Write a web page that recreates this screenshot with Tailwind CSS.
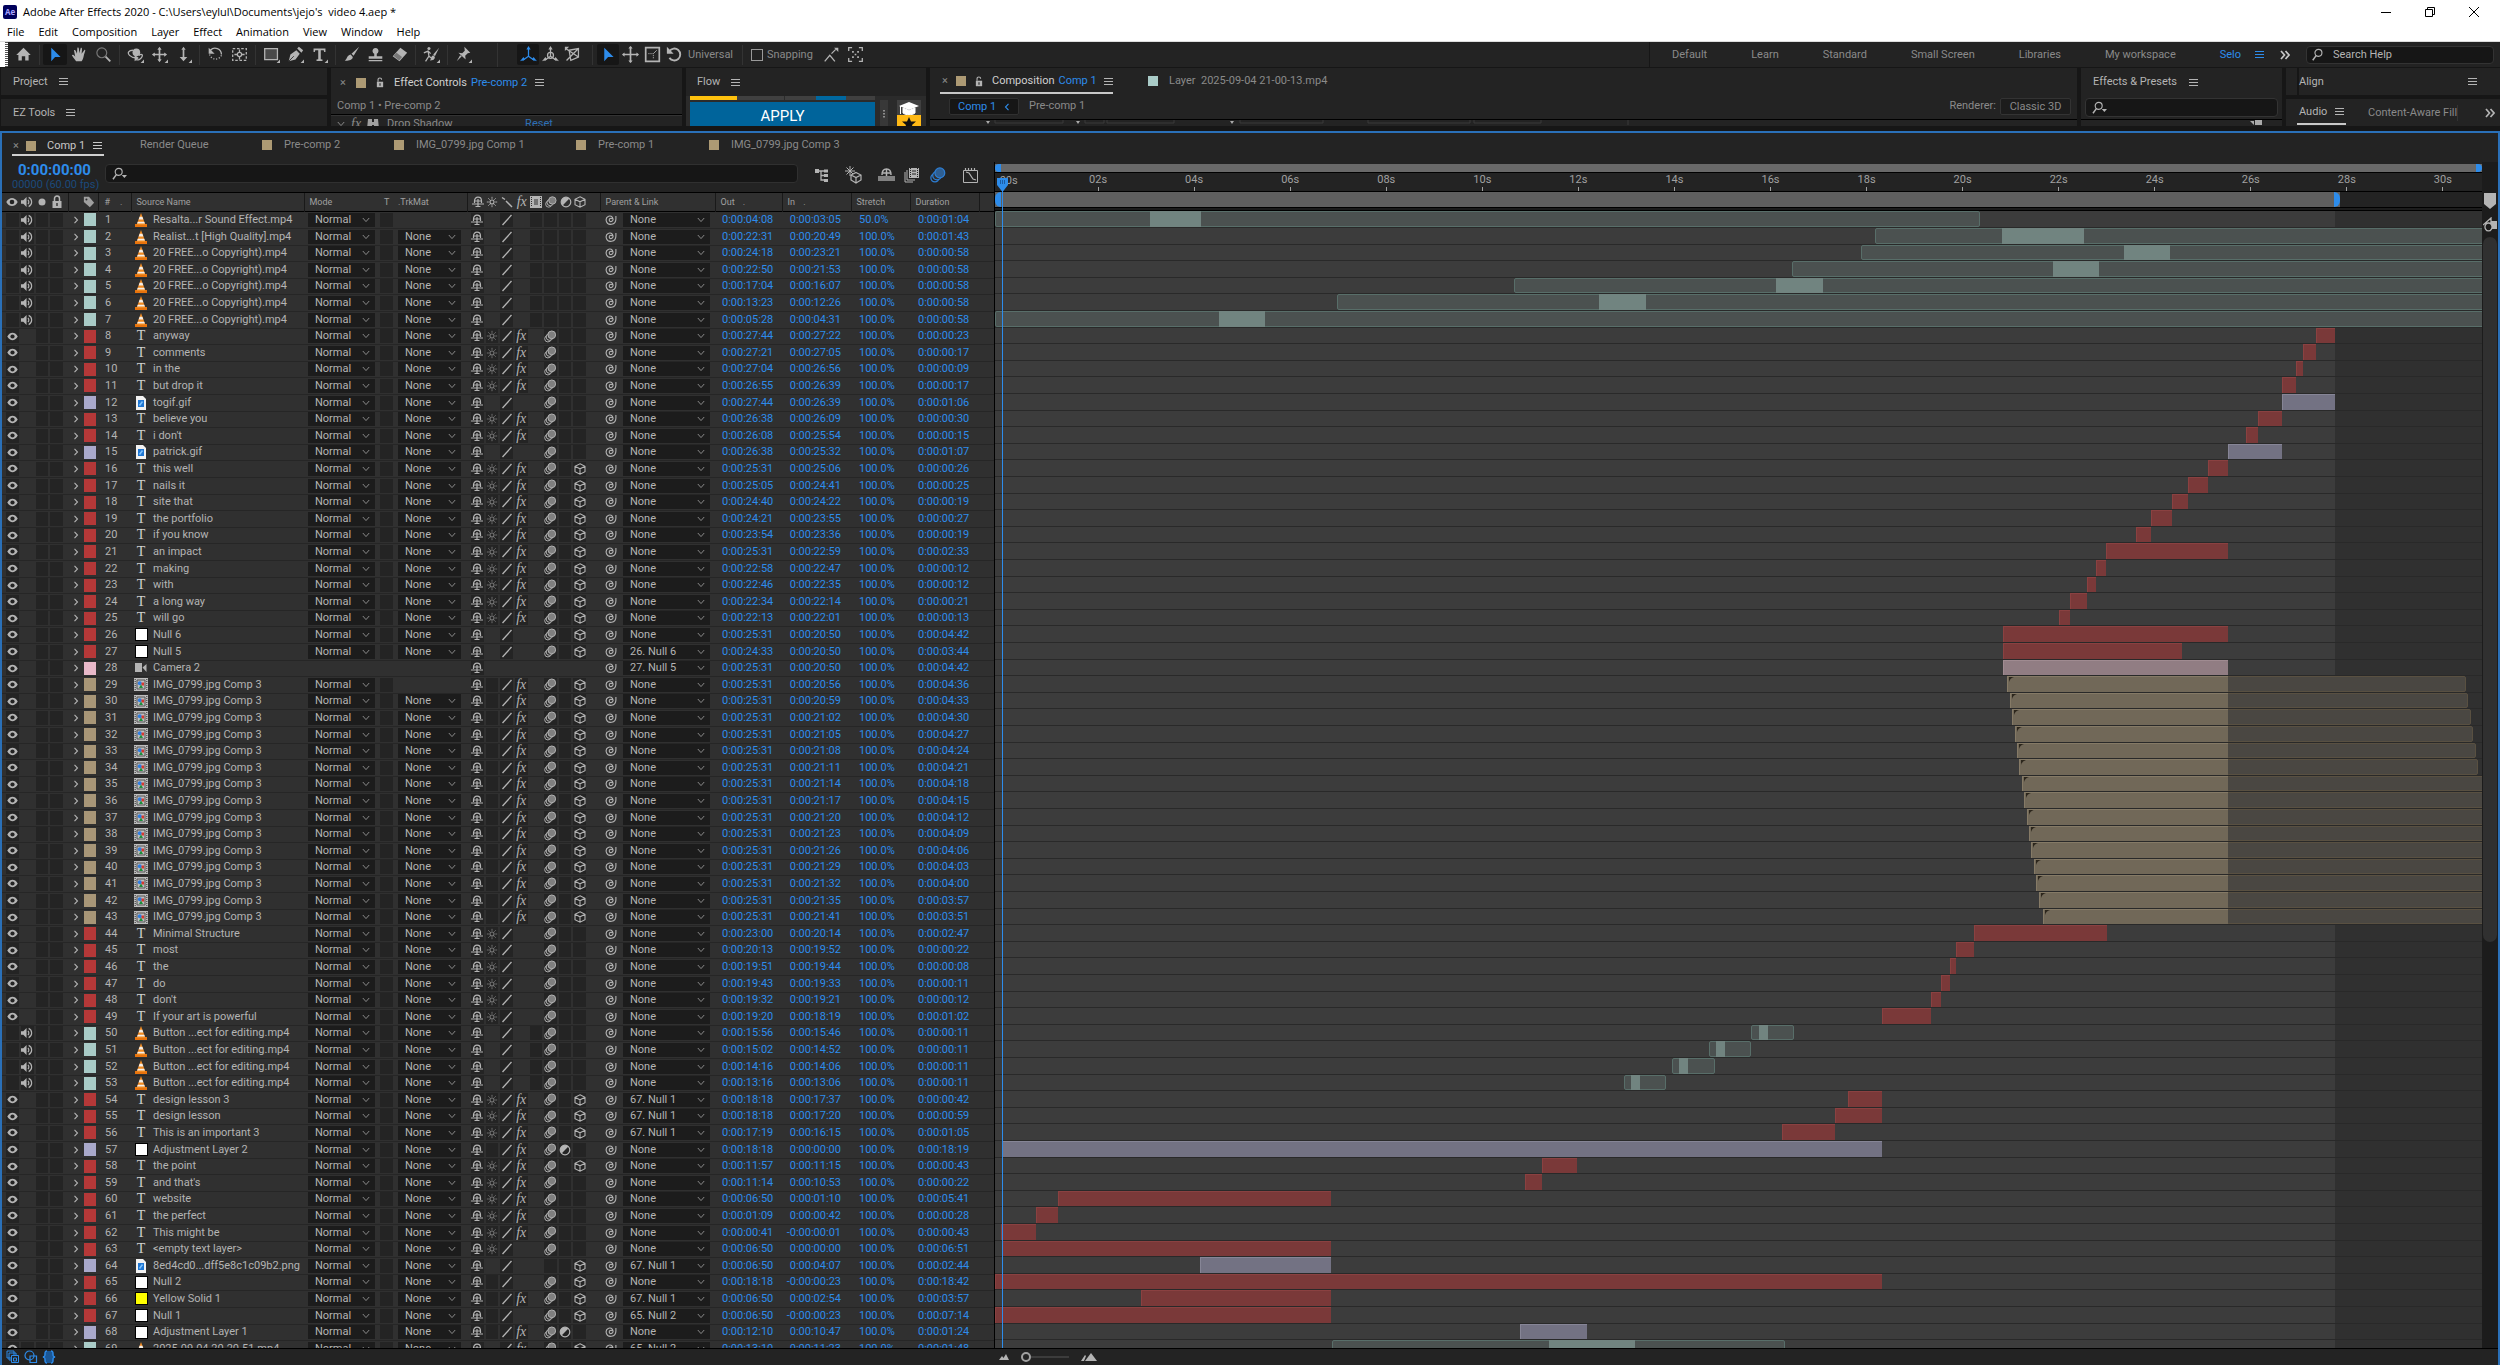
<!DOCTYPE html>
<html lang="en">
<head>
<meta charset="utf-8">
<title>Adobe After Effects 2020</title>
<script src="https://cdn.jsdelivr.net/npm/@tailwindcss/browser@4"></script>
</head>
<body class="flex h-screen flex-col overflow-hidden bg-[#161616] font-[Roboto,sans-serif] text-[11px] leading-4 text-[#b4b4b4]">

<svg class="hidden" aria-hidden="true">
  <symbol id="menu" viewBox="0 0 9 9"><path d="M0 1.500h9M0 4.500h9M0 7.500h9" stroke="currentColor"/></symbol>
  <symbol id="chev" viewBox="0 0 8 6"><path d="M.8 1 4 4.600 7.200 1" fill="none" stroke="currentColor"/></symbol>
  <symbol id="twirl" viewBox="0 0 6 8"><path d="M1.500 .8 4.500 4 1.500 7.200" fill="none" stroke="currentColor" stroke-width="1.100"/></symbol>
  <symbol id="more" viewBox="0 0 10 10"><path d="M1 1l3.500 4L1 9M5.500 1 9 5 5.500 9" fill="none" stroke="currentColor" stroke-width="1.700"/></symbol>
  <symbol id="lens" viewBox="0 0 16 16"><circle cx="8.500" cy="5.500" r="4" fill="none" stroke="currentColor" stroke-width="1.300"/><path d="M6 8.500 2 14" stroke="currentColor" stroke-width="1.700"/></symbol>
  <symbol id="lensdrop" viewBox="0 0 18 16"><circle cx="7.500" cy="5.500" r="4" fill="none" stroke="currentColor" stroke-width="1.300"/><path d="M5 8.500 1 14" stroke="currentColor" stroke-width="1.700"/><path d="M11 9h6l-3 3.500z" fill="currentColor"/></symbol>
  <symbol id="unlock" viewBox="0 0 10 14"><path d="M2.500 6V3.500a2.300 2.300 0 0 1 4.600 0" fill="none" stroke="currentColor" stroke-width="1.400"/><path d="M1 6h8v7H1z" fill="currentColor"/><path d="M5 8v3" stroke="#232323" stroke-width="1.400"/></symbol>
  <symbol id="lock" viewBox="0 0 12 14"><path d="M3.500 6V3.500a2.500 2.500 0 0 1 5 0V6" fill="none" stroke="currentColor" stroke-width="1.500"/><path d="M1.500 6h9v7h-9z" fill="currentColor"/><path d="M6 8v3" stroke="#303030" stroke-width="1.400"/></symbol>
  <symbol id="eye" viewBox="0 0 12 12"><path d="M.3 6C2 3 4 2 6 2s4 1 5.700 4C10 9 8 10 6 10S2 9 .3 6z" fill="currentColor"/><circle cx="6" cy="6" r="2.300" fill="#232323"/></symbol>
  <symbol id="audio" viewBox="0 0 13 13"><path d="M0 4.500h2.500L6 1v11L2.500 8.500H0z" fill="currentColor"/><path d="M7.500 4.200a3.200 3.200 0 0 1 0 4.600M8.300 1.500a5.500 5.500 0 0 1 0 10" fill="none" stroke="currentColor" stroke-width="1.300"/></symbol>
  <symbol id="dot" viewBox="0 0 12 12"><circle cx="6" cy="6" r="3.500" fill="currentColor"/></symbol>
  <symbol id="tag" viewBox="0 0 14 14"><path d="M1 1h6l6 7-5 5-7-6z" fill="currentColor"/><circle cx="4" cy="4" r="1.200" fill="#303030"/></symbol>
  <symbol id="shy" viewBox="0 0 12 12"><path d="M2.500 7V5C2.500 2.700 4 1.200 6 1.200S9.500 2.700 9.500 5v2M2.500 5h7" fill="none" stroke="currentColor" stroke-width="1.200"/><path d="M6 3v7.500M0 8h12M3.500 10.500h5" stroke="currentColor" stroke-width="1.200"/></symbol>
  <symbol id="sun" viewBox="0 0 12 12"><circle cx="6" cy="6" r="2" fill="none" stroke="currentColor" stroke-width="1.100"/><path d="M6 .8v2M6 9.200v2M.8 6h2M9.200 6h2M2.300 2.300l1.400 1.400M8.300 8.300l1.400 1.400M9.700 2.300 8.300 3.700M3.700 8.300 2.300 9.700" stroke="currentColor" stroke-width=".9"/></symbol>
  <symbol id="slash" viewBox="0 0 12 12"><path d="M10.500 1 1.500 11" stroke="currentColor" stroke-width="1.300"/></symbol>
  <symbol id="back" viewBox="0 0 12 12"><path d="M1 1.500l3 2M5 5l6 6" stroke="currentColor" stroke-width="1.500"/></symbol>
  <symbol id="film" viewBox="0 0 12 12"><path d="M0 0h12v12H0z" fill="currentColor"/><path d="M1.500 1v10M10.500 1v10" stroke="#303030" stroke-dasharray="1 1"/><path d="M4 4h4M4 6h4M4 8h4" stroke="#303030"/></symbol>
  <symbol id="blur" viewBox="0 0 13 13"><circle cx="4" cy="8.800" r="3.300" fill="none" stroke="currentColor"/><circle cx="5.700" cy="7" r="3.500" fill="#303030" stroke="currentColor"/><circle cx="8" cy="4.800" r="4" fill="#303030"/><circle cx="8" cy="4.800" r="4" fill="currentColor" opacity=".6"/><circle cx="8" cy="4.800" r="4" fill="none" stroke="currentColor"/></symbol>
  <symbol id="adj" viewBox="0 0 12 12"><circle cx="6" cy="6" r="4.800" fill="none" stroke="currentColor" stroke-width="1.200"/><path d="M9.400 2.600a4.800 4.800 0 1 0-6.800 6.800z" fill="currentColor"/></symbol>
  <symbol id="cube" viewBox="0 0 12 12"><path d="M6 .8 11 3.300v5.400L6 11.200 1 8.700V3.300zM1 3.300l5 2.500 5-2.500M6 5.800v5.400" fill="none" stroke="currentColor" stroke-width="1.100"/></symbol>
  <symbol id="whip" viewBox="0 0 12 12"><path d="M7.400 4.800C6.800 4 5.300 3.900 4.600 4.900c-.8 1.200 0 2.700 1.300 2.700 1.700 0 2.500-1.700 2-3.200C7.300 2.300 5.300 1.500 3.600 2.300 1.500 3.200.8 5.500 1.400 7.400 2 9.500 4.200 10.700 6.600 10.300c2.700-.5 4.300-2.500 4.300-5.300V2" fill="none" stroke="currentColor" stroke-width="1.100"/></symbol>
  <symbol id="cone" viewBox="0 0 12 14"><path d="M0 11h12v3H0z" fill="#e8730c"/><path d="M6 0 1.500 12h9z" fill="#f08a20"/><path d="M4.600 3.800h2.800l1 2.700H3.600zM2.800 8.700h6.400l.7 1.800H2.100z" fill="#f4eee8"/></symbol>
  <symbol id="doc" viewBox="0 0 12 14"><path d="M1 0h7l3 3v11H1z" fill="#f2f2f2"/><path d="M3 4h6v7H3z" fill="#1f77d4"/><path d="M4.500 9.500 7.500 5.500" stroke="#7ec3ff" stroke-width="1.500"/></symbol>
  <symbol id="comp" viewBox="0 0 14 13"><path d="M0 0h14v13H0z" fill="#bdbdbd"/><path d="M1.200 1v11M12.800 1v11" stroke="#333" stroke-dasharray="1 1"/><path d="M3 2h8v9H3z" fill="none" stroke="#555"/><circle cx="5.800" cy="5.200" r="2" fill="#2f7de0"/><path d="M7.500 4.500H10v3H7.500z" fill="#d8382e"/><path d="M7 6.500 9 10H5z" fill="#1c8e3a"/></symbol>
  <symbol id="cam" viewBox="0 0 12 10"><path d="M0 0h7v9H0zM7.500 4.500 11.500 1v8z" fill="currentColor"/></symbol>
</svg>

<!-- title bar and menus -->
<header class="shrink-0 bg-white font-['Open_Sans',sans-serif] text-black">
  <div class="flex h-[23px] items-center pl-[3px]">
    <span class="flex h-3.5 w-3.5 items-center justify-center rounded-xs bg-[#00005b] text-[8px] font-bold text-[#a9a4ff]">Ae</span>
    <h1 class="ml-1.5 text-[11px] whitespace-pre">Adobe After Effects 2020 - C:\Users\eylul\Documents\jejo's  video 4.aep *</h1>
    <div class="ml-auto flex pr-1">
      <button class="flex w-11 justify-center" aria-label="Minimize"><svg class="h-3 w-3" viewBox="0 0 12 12"><path d="M1 6.500h10" stroke="#000"/></svg></button>
      <button class="flex w-11 justify-center" aria-label="Restore"><svg class="h-3 w-3" viewBox="0 0 12 12"><path d="M1.500 3.500h7v7h-7zM3.500 3.500v-2h7v7h-2" fill="none" stroke="#000"/></svg></button>
      <button class="flex w-11 justify-center" aria-label="Close"><svg class="h-3 w-3" viewBox="0 0 12 12"><path d="M1 1l10 10M11 1 1 11" stroke="#000"/></svg></button>
    </div>
  </div>
  <nav class="flex h-[19px] items-center gap-[14px] border-b border-[#ddd] pl-[7px] text-[11px]">
    <a href="#">File</a><a href="#">Edit</a><a href="#">Composition</a><a href="#">Layer</a><a href="#">Effect</a><a href="#">Animation</a><a href="#">View</a><a href="#">Window</a><a href="#">Help</a>
  </nav>
</header>

<!-- tools -->
<div class="flex h-[25px] shrink-0 bg-white">
  <div class="flex w-2 justify-end"><span class="h-full w-[3px] bg-[repeating-linear-gradient(#555_0_1px,#fff_1px_2px)]"></span></div>
  <div class="flex flex-1 items-center bg-[#232323] pl-[3px]">
    <div id="tools" class="flex items-center"></div>
    <span class="ml-[22px] h-6 w-px bg-[#333]"></span>
    <div id="axes" class="ml-[19px] flex items-center"></div>
    <span class="mr-1 ml-[9px] h-5 w-px bg-[#333]"></span>
    <div id="gizmo" class="flex items-center"></div>
    <span class="w-[57px] pl-[3px] text-[#8a8a8a]">Universal</span>
    <span class="h-5 w-px bg-[#333]"></span>
    <label class="ml-2 flex w-16 items-center gap-1 text-[#8a8a8a]"><input type="checkbox" class="h-3 w-3 appearance-none border border-[#9a9a9a]">Snapping</label>
    <div id="snap" class="ml-1 flex items-center"></div>
    <div class="ml-auto flex h-full w-[851px] shrink-0 items-center border-l border-[#161616] text-[#8a8a8a]">
      <div class="flex flex-1 items-center justify-between pr-2 pl-[22px]">
        <a href="#">Default</a><a href="#">Learn</a><a href="#">Standard</a><a href="#">Small Screen</a><a href="#">Libraries</a><a href="#">My workspace</a>
        <a href="#" class="flex items-center gap-3.5 text-[#2d8ceb]">Selo<svg class="size-[9px]"><use href="#menu"/></svg></a>
      </div>
      <button class="px-2 text-[#c8c8c8]" aria-label="More workspaces"><svg class="size-[10px]"><use href="#more"/></svg></button>
      <label class="mr-[6px] ml-2 flex h-[18px] w-[188px] items-center rounded-sm border border-[#333] bg-[#161616] pl-1 text-[#b4b4b4]"><svg class="size-3.5"><use href="#lens"/></svg><input class="ml-2 w-32 placeholder:text-[#b4b4b4]" placeholder="Search Help"></label>
    </div>
  </div>
</div>

<!-- upper panels -->
<div class="mt-px flex h-[58px] shrink-0 gap-1 overflow-hidden pl-px">
  <div class="flex w-[326px] shrink-0 flex-col gap-1">
    <section class="flex flex-1 items-center gap-[11px] bg-[#232323] pl-3">Project<svg class="size-[9px]"><use href="#menu"/></svg></section>
    <section class="flex flex-1 items-center gap-[11px] bg-[#232323] pl-3">EZ Tools<svg class="size-[9px]"><use href="#menu"/></svg></section>
  </div>
  <section class="w-[351px] shrink-0 overflow-hidden bg-[#232323]">
    <div class="flex h-[29px] items-center pl-[9px] whitespace-nowrap"><button class="w-4 text-left text-[#8a8a8a]" aria-label="Close">×</button><span class="h-[10px] w-[10px] bg-[#ad9a74]"></span><svg class="mx-2.5 h-[11px] w-2"><use href="#unlock"/></svg><span class="text-[#d0d0d0]">Effect Controls</span><span class="ml-1 text-[#2d8ceb]">Pre-comp 2</span><svg class="ml-2 size-[9px]"><use href="#menu"/></svg></div>
    <div class="flex h-[18px] items-center border-b border-black pl-1.5 text-[#8a8a8a]">Comp 1 • Pre-comp 2</div>
    <div class="flex h-4 items-center border-t border-[#333] pl-1.5 text-[#8a8a8a]"><svg class="h-1.5 w-2"><use href="#chev"/></svg><i class="ml-1.5 font-['Liberation_Serif',serif] text-[14px]">fx</i><svg class="ml-1.5 h-2.5 w-3" viewBox="0 0 12 10"><path d="M1 0h4v3h2V0h4l1 10H7V6H5v4H0z" fill="#a0a0a0"/></svg><span class="ml-2 w-[138px]">Drop Shadow</span><span class="text-[#2d6fb5]">Reset</span></div>
  </section>
  <section class="w-60 shrink-0 overflow-hidden bg-[#232323]">
    <div class="flex h-7 items-center gap-[11px] pl-[11px]">Flow<svg class="size-[9px]"><use href="#menu"/></svg></div>
    <div class="flex gap-[5px] bg-[#2b2b2b] pl-1">
      <div class="w-[188px]">
        <div class="mb-0.5 flex h-1"><span class="w-[47px] bg-[#ffc20e]"></span><span class="mr-px w-[47px] bg-[#404040]"></span><span class="w-[31px] bg-[#404040]"></span><span class="w-[30px] bg-[#0068a0]"></span><span class="flex-1 bg-[#404040]"></span></div>
        <button class="flex h-7 w-full items-center justify-center bg-[#00649b] text-[15px] text-white">APPLY</button>
      </div>
      <span class="mt-1 flex h-7 w-2 items-center justify-center bg-[#383838]"><svg class="h-2.5 w-1" viewBox="0 0 4 10"><path d="M2 1v8" stroke="#aaa" stroke-width="1.500" stroke-dasharray="1.500 1.500"/></svg></span>
      <span class="mt-1 ml-1 flex w-6 flex-col items-center bg-[#404040]"><svg class="h-[15px] w-5" viewBox="0 0 20 15"><path d="M0 6 10 2l10 4-10 4z" fill="#fff"/><path d="M4 8v5c3 2.500 9 2.500 12 0V8l-6 2.500zM1.500 6v8" fill="#fff" stroke="#fff"/></svg><svg class="h-3 w-6 bg-[#ffb915]" viewBox="0 0 24 12"><path d="M12 2l2 4.500h5L15 10l1 3H8l1-3-4-3.500h5z" fill="#111"/></svg></span>
      <span class="mt-1 flex-1 bg-[#383838]"></span>
    </div>
  </section>
  <section class="flex-1 overflow-hidden bg-[#232323]">
    <div class="flex h-[26px] items-center pl-[10px] whitespace-nowrap">
      <div class="flex h-full w-[173px] items-center border-b-2 border-[#c8c8c8] pt-0.5 pl-0.5"><button class="w-3.5 text-left text-[#8a8a8a]" aria-label="Close">×</button><span class="h-[10px] w-[10px] bg-[#ad9a74]"></span><svg class="mx-2 h-[11px] w-2.5"><use href="#unlock"/></svg><span class="text-[#d0d0d0]">Composition</span><span class="ml-1 text-[#2d8ceb]">Comp 1</span><svg class="ml-auto size-[9px]"><use href="#menu"/></svg></div>
      <span class="ml-[35px] h-[10px] w-[10px] bg-[#a9cbc7]"></span><span class="ml-[11px] text-[#8a8a8a]">Layer&nbsp; 2025-09-04 21-00-13.mp4</span>
    </div>
    <div class="mt-1 flex h-[21px] items-start pr-1.5 pl-[19px]">
      <button class="flex h-[17px] w-[70px] items-center justify-between rounded-xs border border-[#303030] bg-[#161616] px-2 text-[#2d8ceb]">Comp 1<svg class="h-2 w-1.5 rotate-180"><use href="#twirl"/></svg></button>
      <a href="#" class="ml-2.5 text-[#8a8a8a]">Pre-comp 1</a>
      <span class="ml-auto text-[#8a8a8a]">Renderer:</span><button class="ml-1 h-[17px] w-[71px] rounded-xs border border-[#333] bg-[#1c1c1c] text-[#8a8a8a]">Classic 3D</button>
    </div>
    <div class="flex h-1.5 border-t border-black pl-14">
      <svg class="h-1.5 w-[680px]" viewBox="0 0 680 6"><path d="M0 1h4l-2 3zM90 1h4l-2 3zM244 1h4l-2 3z" fill="#aaa"/><path d="M9 0v3h68V0M99 0v3h19V0M121 0v3h67V0M254 0v3h83V0M382 0v3h102V0M488 0v3h67V0" fill="none" stroke="#3a3a3a"/><path d="M642 0v5" stroke="#3a3a3a"/></svg>
    </div>
  </section>
  <section class="w-[201px] shrink-0 overflow-hidden bg-[#232323]">
    <div class="flex h-7 items-center gap-3 pl-3">Effects &amp; Presets<svg class="size-[9px]"><use href="#menu"/></svg></div>
    <label class="mx-1 mt-0.5 flex h-[19px] items-center rounded-sm border border-[#333] bg-[#161616] pl-1.5"><svg class="h-3.5 w-4"><use href="#lensdrop"/></svg><input class="w-32" aria-label="Search effects"></label>
    <div class="mt-0.5 flex h-2 justify-end border-t border-black pr-5"><svg class="h-1.5 w-3" viewBox="0 0 12 6"><path d="M0 1h4v4zM5 0h7v5H5z" fill="#aaa"/></svg></div>
  </section>
  <div class="flex w-[214px] shrink-0 flex-col gap-1">
    <section class="flex flex-1 items-center bg-[#232323] pr-[23px] pl-[11px]"><span class="h-full w-0.5 bg-[#161616]"></span>Align<svg class="ml-auto size-[9px]"><use href="#menu"/></svg></section>
    <section class="flex flex-1 items-center bg-[#232323] pr-[5px] pl-[11px]"><span class="flex h-6 w-[49px] items-center justify-between border-b-2 border-[#c8c8c8] px-0.5">Audio<svg class="size-[9px]"><use href="#menu"/></svg></span><span class="ml-[22px] border-r border-[#333] text-[#8a8a8a]">Content-Aware Fill</span><svg class="ml-auto size-[10px]"><use href="#more"/></svg></section>
  </div>
</div>

<!-- timeline panel -->
<main class="mt-[5px] flex min-h-0 flex-1 flex-col border-t-2 border-r-2 border-l-2 border-[#2a70b8] bg-[#232323]">
  <nav class="flex h-[29px] shrink-0 items-start pl-2.5 text-[#8a8a8a]" aria-label="Timeline tabs">
    <div class="flex h-[23px] w-[92px] items-center border-b-2 border-[#d0d0d0] pt-1 pl-px text-[#c8c8c8]"><button class="w-[13px] text-left text-[#8a8a8a]" aria-label="Close">×</button><span class="mr-[11px] h-[10px] w-[10px] bg-[#ad9a74]"></span>Comp 1<svg class="mr-0.5 ml-auto size-[9px]"><use href="#menu"/></svg></div>
    <div class="flex items-center pt-1">
      <a href="#" class="ml-9 w-[122px]">Render Queue</a>
      <a href="#" class="flex w-[132px] items-center gap-3"><span class="h-[10px] w-[10px] bg-[#ad9a74]"></span>Pre-comp 2</a>
      <a href="#" class="flex w-[182px] items-center gap-3"><span class="h-[10px] w-[10px] bg-[#ad9a74]"></span>IMG_0799.jpg Comp 1</a>
      <a href="#" class="flex w-[133px] items-center gap-3"><span class="h-[10px] w-[10px] bg-[#ad9a74]"></span>Pre-comp 1</a>
      <a href="#" class="flex items-center gap-3"><span class="h-[10px] w-[10px] bg-[#ad9a74]"></span>IMG_0799.jpg Comp 3</a>
    </div>
  </nav>

  <div class="flex min-h-0 flex-1">
    <!-- layer list -->
    <div class="flex w-[993px] shrink-0 flex-col overflow-hidden border-r border-black">
      <div class="flex h-[31px] shrink-0 items-start border-b border-black">
        <div class="w-[103px] pl-2.5"><div class="h-4 text-[15px] leading-4 font-bold whitespace-nowrap text-[#2d8ceb]"><span class="pl-1.5">0:00:00:00</span></div><div class="h-3.5 leading-[14px] whitespace-nowrap text-[#1b4a7c]">00000 (60.00 fps)</div></div>
        <label class="mt-0.5 flex h-[19px] w-[693px] items-center rounded-sm border border-[#303030] bg-[#161616] pl-1.5"><svg class="h-3.5 w-4"><use href="#lensdrop"/></svg><input class="flex-1" aria-label="Search layers"></label>
        <div class="mt-1 ml-[15px] flex flex-1 items-center text-[#b4b4b4]">
          <button class="w-7" aria-label="Flowchart"><svg class="size-4" viewBox="0 0 16 16"><path d="M3 4h9M8 4v9h3M8 8.500h3" fill="none" stroke="currentColor" stroke-width="1.300"/><path d="M2 2h4v4H2zM11 2.500h4v3h-4zM11 7h4v3h-4zM11 12h4v3h-4z" fill="currentColor"/></svg></button>
          <button class="ml-1 w-[33px]" aria-label="Draft 3D"><svg class="size-[18px]" viewBox="0 0 18 18"><path d="M5 0v10M0 5h10M1.500 1.500l7 7M8.500 1.500l-7 7" stroke="currentColor"/><path d="M11 6.500l5 2.500v5l-5 3-5-3V9zM6 9l5 2.500L16 9M11 11.500V17" fill="#232323" stroke="currentColor" stroke-width="1.200"/></svg></button>
          <button class="w-[26px]" aria-label="Hide shy layers"><svg class="h-4 w-[17px]" viewBox="0 0 17 16"><path d="M4 8c0-4 2-6 4.500-6S13 4 13 8" fill="none" stroke="currentColor" stroke-width="1.500"/><path d="M8.500 2v7M5 6h7" stroke="currentColor" stroke-width="1.500"/><path d="M0 9h17v5H0z" fill="currentColor" opacity=".65"/></svg></button>
          <button class="w-[26px]" aria-label="Frame blending"><svg class="h-4 w-[15px]" viewBox="0 0 15 16"><path d="M1 5v10h8M3 3v10h8" fill="none" stroke="currentColor"/><path d="M5 1h10v10H5z" fill="currentColor"/><path d="M6.500 1v10M13.500 1v10" stroke="#232323" stroke-dasharray="1 1"/><path d="M8 4h4M8 7h4" stroke="#232323"/></svg></button>
          <button class="w-8 text-[#2d7fd6]" aria-label="Motion blur"><svg class="size-4"><use href="#blur"/></svg></button>
          <button aria-label="Graph editor"><svg class="size-[17px]" viewBox="0 0 17 17"><path d="M1.500 3.500h14v12h-14z" fill="none" stroke="currentColor"/><path d="M3.500 1v2M6.500 1v2M9.500 1v2M12.500 1v2M4 5l3 1 4 6 3 1" fill="none" stroke="currentColor" stroke-width="1.200"/></svg></button>
        </div>
      </div>
      <div class="min-h-0 flex-1 overflow-hidden">
        <table class="w-[992px] table-fixed border-collapse bg-[#303030]">
          <colgroup><col class="w-[66px]"><col class="w-[30px]"><col class="w-[33px]"><col class="w-[173px]"><col class="w-[74px]"><col class="w-4"><col class="w-[73px]"><col class="w-[133px]"><col class="w-[115px]"><col class="w-[67px]"><col class="w-[69px]"><col class="w-[59px]"><col class="w-[69px]"><col class="w-[15px]"></colgroup>
          <thead class="text-left text-[9px] text-[#a0a0a0]"><tr id="head" class="h-[18px] border-b border-black"></tr></thead>
          <tbody id="rows"></tbody>
        </table>
      </div>
    </div>

    <!-- time graph -->
    <div class="relative flex min-w-0 flex-1 flex-col overflow-hidden">
      <div class="mt-0.5 flex h-2 shrink-0 bg-[#696969]"><span class="h-full w-1.5 rounded-l-full bg-[#2d8ceb]"></span><span class="ml-auto h-full w-1.5 rounded-r-full bg-[#2d8ceb]"></span></div>
      <div id="ruler" class="relative h-[20px] shrink-0 border-t border-b border-black text-[#a0a0a0]"></div>
      <div class="h-[15px] shrink-0"><div id="work" class="flex h-full bg-[#5f5f5f]"><span class="h-full w-1.5 rounded-l-full bg-[#2d8ceb]"></span><span class="ml-auto h-full w-1.5 rounded-r-full bg-[#2d8ceb]"></span></div></div>
      <div class="h-1 shrink-0 border-t border-b border-black bg-[#1c1c1c]"></div>
      <div class="relative min-h-0 flex-1 overflow-hidden bg-[#303030]"><div id="compArea" class="absolute inset-y-0 left-0 bg-[#3c3c3c]"></div><div id="bars" class="relative"></div></div>
      <div id="playhead" class="absolute top-[16px] bottom-0 w-px bg-[#2d8ceb]"><svg class="absolute top-0 -left-[5px] h-3.5 w-[11px]" viewBox="0 0 11 14"><path d="M0 0h11v7l-5.500 7L0 7z" fill="#2d8ceb"/><path d="M3.500 2v4M5.500 2v4M7.500 2v4" stroke="#1a5da6"/></svg></div>
    </div>

    <!-- vertical scroll -->
    <div class="flex w-4 shrink-0 flex-col items-center bg-[#1c1c1c] pt-[31px]">
      <svg class="h-4 w-3" viewBox="0 0 12 16"><path d="M0 0h12v11l-6 5-6-5z" fill="#b4b4b4"/></svg>
      <svg class="mt-2 h-4 w-3.5 shrink-0" viewBox="0 0 14 16"><path d="M5 4h9v8H7z" fill="#b4b4b4"/><path d="M0 8 8 1v5M5 6a3.500 4 0 1 0 1 0z" fill="#1c1c1c" stroke="#b4b4b4" stroke-width="1.300"/></svg>
      <div class="mt-1 h-[61%] w-3.5 rounded-full bg-[#303030]"></div>
    </div>
  </div>

  <!-- footer -->
  <footer class="flex h-[17px] shrink-0 items-center border-t border-black bg-[#232323]">
    <div class="flex w-[993px] gap-1 pl-1 text-[#2d8ceb]">
      <button aria-label="Layer switches"><svg class="size-3.5" viewBox="0 0 14 14"><path d="M1 1h7v7H1zM3 3h7v7H3z" fill="#232323" stroke="currentColor"/><path d="M5.500 5.500h7v7h-7zM7.500 8h3v3h-3z" fill="#232323" stroke="currentColor"/></svg></button>
      <button aria-label="Transfer controls"><svg class="size-3.5" viewBox="0 0 14 14"><circle cx="5.500" cy="5.500" r="4.500" fill="none" stroke="currentColor" stroke-width="1.200"/><path d="M6 6h6.500v6.500H6z" fill="none" stroke="currentColor" stroke-width="1.200"/></svg></button>
      <button aria-label="In and out"><svg class="size-3.5" viewBox="0 0 14 14"><path d="M4.500 1h5v12h-5z" fill="#1b5796"/><path d="M5 1c-2 0-2 1-2 3s0 2.500-2 3c2 .5 2 1 2 3s0 3 2 3M9 1c2 0 2 1 2 3s0 2.500 2 3c-2 .5-2 1-2 3s0 3-2 3" fill="#1b5796" stroke="currentColor" stroke-width="1.500"/></svg></button>
    </div>
    <svg class="ml-1 h-1.5 w-2.5" viewBox="0 0 10 6"><path d="M0 6l3-4 1.500 2L7 0l3 6z" fill="#b4b4b4"/></svg>
    <input type="range" min="0" max="100" value="0" aria-label="Zoom" class="mx-3 h-3 w-12 appearance-none bg-[linear-gradient(#3c3c3c,#3c3c3c)] bg-[length:100%_2px] bg-center bg-no-repeat [&::-webkit-slider-thumb]:size-[10px] [&::-webkit-slider-thumb]:appearance-none [&::-webkit-slider-thumb]:rounded-full [&::-webkit-slider-thumb]:border-2 [&::-webkit-slider-thumb]:border-[#a0a0a0] [&::-webkit-slider-thumb]:bg-[#232323]">
    <svg class="h-2 w-4" viewBox="0 0 16 8"><path d="M0 8 4 2l1 1-2 5zM4 8l6-8 6 8z" fill="#b4b4b4"/></svg>
  </footer>
</main>

<script>
const use = (id, cls) => `<svg class="${cls}"><use href="#${id}"/></svg>`;

/* toolbar glyphs on a 20px grid */
const C = 'fill="currentColor"', S = 'fill="none" stroke="currentColor" stroke-width="1.5"';
const corner = `<path d="M20 16v4h-4z" ${C}/>`;
const arrow = `<path d="M5 2v16l4.500-5H16z" ${C}/>`;
const tools = [
  ['Home', `<path d="M10 2 1.500 10.500H4V17h4v-5h4v5h4v-6.500h2.500z" ${C}/>`], '|',
  ['Selection', arrow, 1],
  ['Hand', `<path d="M6 18c-2-3-4-5-5-7 1-1.300 2-.5 4 1.500L3.500 5C5 4 5.500 5 7 9L7.500 2c1.500-.8 2 0 2.200 6.500L11.500 2c1.500-.3 1.800.5 1 7L16 4.500c1.300.3 1 1-.7 5.500-.7 4-1.300 6-2.800 8z" ${C}/>`],
  ['Zoom', `<circle cx="8" cy="8" r="5.800" fill="none" stroke="#777" stroke-width="1.400"/><path d="M12.500 12.500 18 18" stroke="currentColor" stroke-width="2.200"/>`], '|',
  ['Orbit camera', `<circle cx="11" cy="7.500" r="4.500" ${C}/><path d="M7 5C2 5 0 8 3 11c2 2 5 3 8 3M14 11c3-2 5-1 3.500 2s-5 4-6.500 3" ${S}/><path d="M9 10.500 14 14l-5 4z" ${C}/>${corner}`],
  ['Pan camera', `<path d="M10 3v14M3 10h14" stroke="currentColor" stroke-width="2"/><path d="M10 1 7.500 4.500h5zM10 19l-2.500-3.500h5zM1 10l3.500-2.500v5zM19 10l-3.500-2.500v5z" ${C}/>${corner}`],
  ['Dolly camera', `<path d="M10 4v10" stroke="currentColor" stroke-width="2"/><path d="M10 1 7.500 4.500h5zM10 18l-4.500-5h9z" ${C}/>${corner}`], '|',
  ['Rotation', `<path d="M4 5a7.500 7.500 0 0 1 13 5" ${S}/><path d="M17 11a7.500 7.500 0 0 1-14-1" fill="none" stroke="currentColor" stroke-width="1.500" stroke-dasharray="1.300 2"/><path d="M2 2v7h7z" ${C}/>`],
  ['Anchor point', `<path d="M2 3h16v14H2z" fill="none" stroke="currentColor" stroke-width="1.500" stroke-dasharray="3 2"/><circle cx="10" cy="10" r="2.500" ${S}/><path d="M10 4v4M10 12v4M4 10h3M13 10h3" stroke="currentColor" stroke-width="1.500"/>`], '|',
  ['Rectangle', `<path d="M2 3h15v13H2z" fill="#4a4a4a" stroke="currentColor" stroke-width="1.500"/>${corner}`],
  ['Pen', `<path d="M2 18l2-8 7-5 4 4-5 7zM12 3l2-2 5 4-2 3z" ${C}/><path d="M2 18l6-6" stroke="#232323"/>${corner}`],
  ['Type', `<path d="M3 3h14v4h-1.500L15 5h-3.500v10.500l2 .5v1.500h-7V16l2-.5V5H5l-.5 2H3z" ${C}/>${corner}`], '|',
  ['Brush', `<path d="M19 1 10 9l2.500 2.500zM9 10l2.500 3c0 3-4 5-9.500 4 3-1 2-6 7-7z" ${C}/>`],
  ['Clone stamp', `<path d="M8.500 9a3.500 3.500 0 1 1 3 0v3H18v3H2v-3h6.500zM2 16.500h16V18H2z" ${C}/>`],
  ['Eraser', `<path d="M11 2l8 6-9 10-8-6z" ${C}/><path d="M3 11.500 6.500 8l6.500 5-3.500 4z" fill="#777"/>`], '|',
  ['Roto brush', `<circle cx="7" cy="3" r="1.800" ${C}/><path d="M1 8l5-2 3 3M6 6l1 6-4 6M7 12l4 3" ${S}/><path d="M19 2l-7 8 2 2zM12 11l2 2c0 3-2 4-6 4 2-1 1-5 4-6z" ${C}/>${corner}`], '|',
  ['Puppet pin', `<path d="M11 1l7 7-3 .5-3 3 .5 4.500L4 8l4.500.5 3-3zM8 12l-6 6 4-7z" ${C}/>${corner}`],
];
const axis = `<path d="M10 3v9l-7 5M10 12l7 5" ${S}/><path d="M10 0 7.500 4h5zM0 18l4-5 2 3zM20 18l-4-5-2 3z" ${C}/>`;
const axes = [['Local axis', axis, 1], ['World axis', axis + `<circle cx="10" cy="11" r="3.500" ${S}/>`], ['View axis', `<path d="M6 5l11-2v10l-9 4zM2 3l15 10M3 17 17 3" ${S}/><path d="M1 1h5L1 6z" ${C}/>`]];
const gizmo = [['Universal gizmo', arrow, 1], ['Move', `<path d="M10 1v18M1 10h18" stroke="currentColor" stroke-width="2"/><path d="M10 0 7.500 3h5zM10 20l-2.500-3h5zM0 10l3-2.500v5zM20 10l-3-2.500v5z" ${C}/>`], ['Scale', `<path d="M2 2h16v16H2z" fill="none" stroke="currentColor" stroke-width="2"/><path d="M5 9h6v6" fill="none" stroke="currentColor" stroke-dasharray="1.500 1"/><path d="M11 9l4-4" stroke="currentColor"/>`], ['Rotate', `<path d="M4 6a7 7 0 1 1 0 8" fill="none" stroke="currentColor" stroke-width="2.200"/><path d="M1 1v8h8z" ${C}/>`]];
const snap = [['Snap edges', `<path d="M2 18l6-7 6 7M10 9l5-5" ${S}/><path d="M13 2h5v5z" ${C}/>`], ['Snap features', `<path d="M2 6V2h4M14 2h4v4M18 14v4h-4M6 18H2v-4" ${S}/><path d="M6 6h2v2H6zM12 6h2v2h-2zM6 12h2v2H6zM12 12h2v2h-2zM9 9h2v2H9z" ${C}/>`]];
const tool = w => t => t === '|' ? `<span class="flex w-2 justify-center"><span class="h-5 w-px bg-[#333]"></span></span>`
  : `<button aria-label="${t[0]}" class="${w} ${t[2] ? 'flex h-[21px] items-center justify-center rounded-xs bg-[#161616] text-[#2d8ceb]' : 'flex h-[21px] items-center justify-center text-[#b4b4b4]'}"><svg class="size-[17px]" viewBox="0 0 20 20">${t[1]}</svg></button>`;
const put = (id, html) => document.getElementById(id).innerHTML = html;
put('tools', tools.map(tool('w-6')).join(''));
put('axes', axes.map(tool('w-[22px]')).join(''));
put('gizmo', gizmo.map(tool('w-[22px]')).join(''));
put('snap', snap.map(tool('w-6')).join(''));

/* column headers */
const fx = `<i class="font-['Liberation_Serif',serif] text-[14px] leading-3">fx</i>`;
const th = (html, cls = '') => `<th class="border-r border-[#191919] p-0 font-normal ${cls}">${html}</th>`;
const slots = a => a.map(x => `<span class="flex justify-center">${x}</span>`).join('');
put('head',
  th(`<div class="ml-[3px] grid w-[59px] grid-cols-4 items-center text-[#b4b4b4]">${slots([use('eye', 'size-3'), use('audio', 'size-3'), use('dot', 'size-3'), use('lock', 'h-3.5 w-3')])}</div>`) +
  th(use('tag', 'ml-3.5 h-3.5 w-3')) + th('<span class="pl-1.5">#</span><span class="pl-2.5">.</span>') +
  th('Source Name', 'pl-[5px]') + `<th class="p-0 pl-[5px] font-normal">Mode</th><th class="p-0 pl-1.5 font-normal">T</th>` + th('.TrkMat', 'pl-1') +
  th(`<div class="ml-[3px] grid w-[117px] grid-cols-8 items-center text-[#b4b4b4]">${slots([use('shy', 'size-3'), use('sun', 'size-3'), use('back', 'size-3'), fx, use('film', 'size-3'), use('blur', 'size-3'), use('adj', 'size-3'), use('cube', 'size-3')])}</div>`) +
  th('Parent &amp; Link', 'pl-[5px]') + th('Out <span class="pl-1.5">.</span>', 'pl-[5px]') + th('In <span class="pl-1.5">.</span>', 'pl-[5px]') +
  th('Stretch', 'pl-[5px]') + th('Duration', 'pl-[5px]') + '<th></th>');

/* kind: label colour, source icon, bar colour */
const T = `<span class="font-['Liberation_Serif',serif] text-[14px] leading-3 text-[#d0d0d0]">T</span>`;
const kinds = {
  v: ['bg-[#a9cbc7]', use('cone', 'h-3.5 w-3'), 'bg-[#718480]'],
  t: ['bg-[#b53838]', T, 'bg-[#7a3939] border-[#8a4141]'],
  g: ['bg-[#a9a9cb]', use('doc', 'h-3.5 w-3'), 'bg-[#737283] border-[#868596]'],
  n: ['bg-[#b53838]', '<span class="h-[13px] w-[13px] border border-black bg-white"></span>', 'bg-[#7a3939] border-[#8a4141]'],
  y: ['bg-[#b53838]', '<span class="h-[13px] w-[13px] border border-black bg-[#ffff00]"></span>', 'bg-[#7a3939] border-[#8a4141]'],
  a: ['bg-[#a9a9cb]', '<span class="h-[13px] w-[13px] border border-black bg-white"></span>', 'bg-[#737283] border-[#868596]'],
  k: ['bg-[#e8b8c8]', use('cam', 'h-2.5 w-3'), 'bg-[#917d83] border-[#a08b91]'],
  c: ['bg-[#a89677]', use('comp', 'h-[13px] w-3.5'), 'bg-[#716858] border-[#857a66]'],
};
/* switches: x on, . empty cell, - none */
const A = 'x-x-....', B = 'x-x-.x..', F = 'xxxx-x..', F3 = 'xxxx-x.x', P = 'xxx--x..', G = 'x-x--x..', N = 'x.x--x.x', I = 'x.xx-x.x', J = 'x.xx-xx.';
const cp = 'IMG_0799.jpg Comp 3', bt = 'Button ...ect for editing.mp4', fr = '20 FREE...o Copyright).mp4';
const L = [
  ['v','Resalta...r Sound Effect.mp4',A,'04:08','03:05','01:04',,-1,20.37], ['v','Realist...t [High Quality].mp4',A,'22:31','20:49','01:43',,18.17,31],
  ['v',fr,A,'24:18','23:21','00:58',,17.88,31], ['v',fr,A,'22:50','21:53','00:58',,16.44,31], ['v',fr,A,'17:04','16:07','00:58',,10.66,31],
  ['v',fr,A,'13:23','12:26','00:58',,6.97,31], ['v',fr,A,'05:28','04:31','00:58',,-1,31],
  ['t','anyway',F,'27:44','27:22','00:23'], ['t','comments',F,'27:21','27:05','00:17'], ['t','in the',F,'27:04','26:56','00:09'], ['t','but drop it',F,'26:55','26:39','00:17'],
  ['g','togif.gif',G,'27:44','26:39','01:06'], ['t','believe you',F,'26:38','26:09','00:30'], ['t',"i don't",F,'26:08','25:54','00:15'], ['g','patrick.gif',G,'26:38','25:32','01:07'],
  ['t','this well',F3,'25:31','25:06','00:26'], ['t','nails it',F3,'25:05','24:41','00:25'], ['t','site that',F3,'24:40','24:22','00:19'], ['t','the portfolio',F3,'24:21','23:55','00:27'],
  ['t','if you know',F3,'23:54','23:36','00:19'], ['t','an impact',F3,'25:31','22:59','02:33'], ['t','making',F3,'22:58','22:47','00:12'], ['t','with',F3,'22:46','22:35','00:12'],
  ['t','a long way',F3,'22:34','22:14','00:21'], ['t','will go',F3,'22:13','22:01','00:13'],
  ['n','Null 6','x-x--x.x','25:31','20:50','04:42'], ['n','Null 5','x-x--x.x','24:33','20:50','03:44','26. Null 6'], ['k','Camera 2','x-------','25:31','20:50','04:42','27. Null 5'],
  ['c',cp,I,'25:31','20:56','04:36',,0,30.48], ['c',cp,I,'25:31','20:59','04:33',,0,30.52], ['c',cp,I,'25:31','21:02','04:30',,0,30.58], ['c',cp,I,'25:31','21:05','04:27',,0,30.63],
  ['c',cp,I,'25:31','21:08','04:24',,0,30.68], ['c',cp,I,'25:31','21:11','04:21',,0,30.73], ['c',cp,I,'25:31','21:14','04:18',,0,31], ['c',cp,I,'25:31','21:17','04:15',,0,31],
  ['c',cp,I,'25:31','21:20','04:12',,0,31], ['c',cp,I,'25:31','21:23','04:09',,0,31], ['c',cp,I,'25:31','21:26','04:06',,0,31], ['c',cp,I,'25:31','21:29','04:03',,0,31],
  ['c',cp,I,'25:31','21:32','04:00',,0,31], ['c',cp,I,'25:31','21:35','03:57',,0,31], ['c',cp,I,'25:31','21:41','03:51',,0,31],
  ['t','Minimal Structure',P,'23:00','20:14','02:47'], ['t','most',P,'20:13','19:52','00:22'], ['t','the',P,'19:51','19:44','00:08'], ['t','do',P,'19:43','19:33','00:11'],
  ['t',"don't",P,'19:32','19:21','00:12'], ['t','If your art is powerful',P,'19:20','18:19','01:02'],
  ['v',bt,B,'15:56','15:46','00:11',,15.6,16.48], ['v',bt,B,'15:02','14:52','00:11',,14.73,15.6], ['v',bt,B,'14:16','14:06','00:11',,13.94,14.84], ['v',bt,B,'13:16','13:06','00:11',,12.96,13.83],
  ['t','design lesson 3',F3,'18:18','17:37','00:42','67. Null 1'], ['t','design lesson',F3,'18:18','17:20','00:59','67. Null 1'], ['t','This is an important 3',F3,'17:19','16:15','01:05','67. Null 1'],
  ['a','Adjustment Layer 2',J,'18:18','00:00','18:19'], ['t','the point',F3,'11:57','11:15','00:43'], ['t',"and that's",F,'11:14','10:53','00:22'], ['t','website',F,'06:50','01:10','05:41'],
  ['t','the perfect',F,'01:09','00:42','00:28'], ['t','This might be',F,'00:41','-00:01','00:43'], ['t','&lt;empty text layer&gt;',P,'06:50','00:00','06:51'],
  ['g','8ed4cd0...dff5e8c1c09b2.png','x-x--..x','06:50','04:07','02:44','67. Null 1'], ['n','Null 2',N,'18:18','-00:23','18:42'], ['y','Yellow Solid 1',I,'06:50','02:54','03:57','67. Null 1'],
  ['n','Null 1',N,'06:50','-00:23','07:14','65. Null 2'], ['a','Adjustment Layer 1',J,'12:10','10:47','01:24'], ['v','2025-09-04 20-20-51.mp4','x-xx-x.x','13:10','11:23','01:48','65. Null 2',6.87,16.3],
];
const sw = [use('shy', 'size-3'), use('sun', 'size-3 text-[#787878]'), use('slash', 'size-3'), fx, use('film', 'size-3'), use('blur', 'size-[13px]'), use('adj', 'size-3'), use('cube', 'size-3')];
const cell = (on, icon) => on === '-' ? '<span></span>' : `<span class="mx-px flex h-3.5 items-center justify-center overflow-hidden bg-[#242424]">${on === 'x' ? icon : ''}</span>`;
const select = (w, txt, label) => `<div class="relative ${w}"><select aria-label="${label}" class="block h-3.5 w-full appearance-none bg-[#1c1c1c] pl-[7px] text-[11px] leading-3.5 text-[#b4b4b4]"><option>${txt}</option></select>${use('chev', 'pointer-events-none absolute top-1 right-[5px] h-1.5 w-2 text-[#8a8a8a]')}</div>`;
const tc = s => s[0] === '-' ? '-0:00:' + s.slice(1) : '0:00:' + s;
const rowH = ['h-[17px]', 'h-[17px]', 'h-4', 'h-[17px]', 'h-4'];

put('rows', L.map(([k, name, s, out, inn, dur, parent], i) => {
  const aud = k === 'v' && i < 68, cam = k === 'k';
  const td = (h, c = '') => `<td class="p-0 ${c}">${h}</td>`;
  const num = (h, c) => `<td class="p-0 leading-3.5 text-[#2d8ceb] ${c}">${h}</td>`;
  return `<tr class="${rowH[i % 5]} border-b border-[#262626]">` +
    td(`<div class="ml-[3px] grid w-[59px] grid-cols-4">${cell(aud ? '.' : 'x', use('eye', 'size-[11px]')) + (aud ? cell('x', use('audio', 'size-3')) : cell(i === 68 ? '.' : '-')) + cell('.') + cell('.')}</div>`) +
    td(`<div class="flex items-center pl-[5px]">${use('twirl', 'mr-1 h-2 w-1.5')}<span class="ml-px h-[13px] w-3 ${kinds[k][0]}"></span></div>`) +
    td(i + 1, 'pl-[7px] leading-3.5') +
    td(`<div class="flex h-3.5 items-center pl-[3px]"><span class="mr-[5px] flex w-3.5 justify-center">${kinds[k][1]}</span><span class="whitespace-nowrap">${name}</span></div>`) +
    td(cam ? '' : select('ml-1 w-[67px]', 'Normal', 'Mode')) +
    td(cam ? '' : '<div class="ml-0.5 h-3.5 w-[13px] bg-[#242424]"></div>') +
    td(cam || i === 0 || i === 28 ? '' : select('ml-1 w-[63px]', 'None', 'Track matte')) +
    td(`<div class="ml-[3px] grid w-[117px] grid-cols-8">${sw.map((x, j) => cell(s[j], x)).join('')}</div>`) +
    td(`<div class="flex items-center pl-[5px]">${use('whip', 'mr-1.5 size-3 shrink-0')}${select('w-[87px]', parent || 'None', 'Parent')}</div>`) +
    num(tc(out), 'pl-[7px]') + num(tc(inn), 'pr-[10px] text-right') + num(i ? '100.0%' : '50.0%', 'pl-2') + num(tc('' + dur), 'pl-2') + '<td></td></tr>';
}).join(''));

/* time to horizontal position */
const T0 = -0.146, SPAN = 30.96;
const pct = t => (t - T0) / SPAN * 100;
const sec = s => { const neg = s[0] === '-', [a, b] = s.replace('-', '').split(':').map(Number); return (a + b / 60) * (neg ? -1 : 1); };
const box = (a, b) => { a = Math.max(a, T0); return `left:${pct(a)}%;width:${(b - a) / SPAN * 100}%`; };
put('bars', L.map(([k, , , out, inn, , , d0, d1], i) => {
  const a = sec(inn), b = sec(out) + 1 / 60;
  let h = '';
  if (d1) h += `<span class="${k === 'c' ? 'absolute inset-y-0 rounded-xs border border-[#595041] bg-[#4a4742]' : 'absolute inset-y-0 rounded-xs border border-[#586e69] bg-[#4b5150]'}" style="${box(k === 'c' ? a : d0, d1)}"></span>`;
  h += `<span class="${k === 'v' ? 'absolute inset-y-0' : 'absolute inset-y-0 border-t border-l'} ${kinds[k][2]}" style="${box(a, b)}">${k === 'c' ? '<svg class="h-1.5 w-1.5" viewBox="0 0 6 6"><path d="M1 0h5Q2 1 1 5z" fill="#2c261c"/></svg>' : ''}</span>`;
  return `<div class="relative ${rowH[i % 5]} border-b border-[#292929]">${h}</div>`;
}).join(''));
let r = '<span class="absolute top-0 left-0.5">:00s</span>';
for (let t = 2; t <= 30; t += 2) r += `<span class="absolute inset-y-0 flex w-10 -translate-x-1/2 flex-col items-center justify-between" style="left:${pct(t)}%"><span class="leading-3.5">${String(t).padStart(2, '0')}s</span><span class="h-1 w-px bg-[#a0a0a0]"></span></span>`;
put('ruler', r);
document.getElementById('work').style.width = pct(27.85) + '%';
document.getElementById('compArea').style.width = pct(27.75) + '%';
document.getElementById('playhead').style.left = pct(0) + '%';
</script>
</body>
</html>
